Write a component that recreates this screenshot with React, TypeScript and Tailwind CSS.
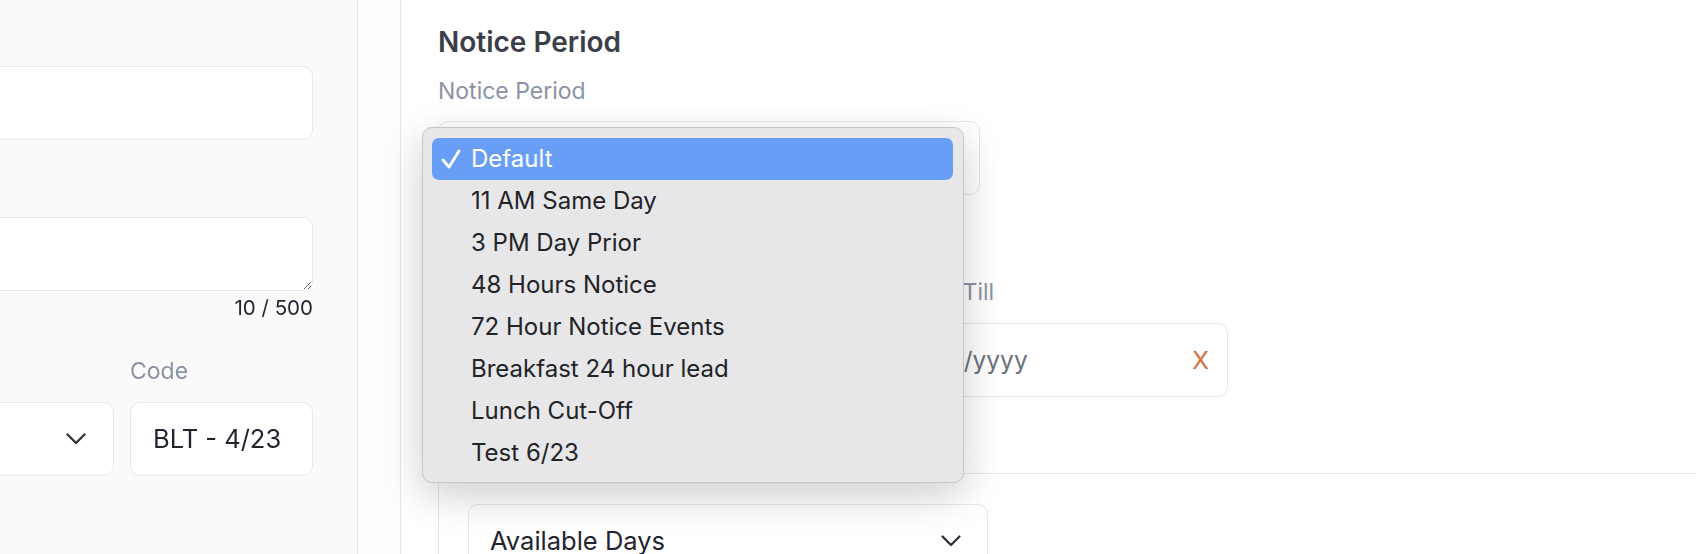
import type { ReactNode } from "react";

const noticeOptions = [
  "Default",
  "11 AM Same Day",
  "3 PM Day Prior",
  "48 Hours Notice",
  "72 Hour Notice Events",
  "Breakfast 24 hour lead",
  "Lunch Cut-Off",
  "Test 6/23",
];

function Chevron() {
  return (
    <svg width="20" height="12" viewBox="0 0 20 12" fill="none" className="shrink-0">
      <polyline
        points="1.5,1.5 10,10 18.5,1.5"
        stroke="#2b2f36"
        strokeWidth="2.2"
        strokeLinecap="round"
        strokeLinejoin="round"
      />
    </svg>
  );
}

function Check() {
  return (
    <svg width="20" height="20" viewBox="0 0 20 20" fill="none" className="shrink-0">
      <polyline
        points="2,11 8,18 18,2"
        stroke="#ffffff"
        strokeWidth="2.8"
        strokeLinecap="round"
        strokeLinejoin="round"
      />
    </svg>
  );
}

function FieldLabel({ children }: { children: ReactNode }) {
  return <label className="block text-[23px] leading-[30px] text-[#8a93a5]">{children}</label>;
}

function DateField({ label }: { label: string }) {
  return (
    <div>
      <FieldLabel>{label}</FieldLabel>
      <div className="mt-[16px] flex h-[74px] items-center justify-between rounded-[10px] border border-[#e6e7ea] bg-white pl-[22px] pr-[18px] text-[24.5px]">
        <span className="text-[#6b7280]">mm/dd/yyyy</span>
        <span className="text-[#d0703a]">X</span>
      </div>
    </div>
  );
}

export default function App() {
  return (
    <div className="flex h-[554px] w-[1696px] overflow-hidden bg-white font-['Inter','Liberation_Sans',sans-serif] text-[#1f2430]">
      {/* left form column, mostly scrolled out of view */}
      <aside className="w-[358px] shrink-0 overflow-hidden border-r border-[#e6e7ea] bg-[#fafafa]">
        <div className="ml-[-287px] w-[600px] pt-[66px]">
          <div className="h-[74px] rounded-[10px] border border-[#e6e7ea] bg-white" />

          <textarea
            className="mt-[77px] block h-[74px] w-full resize-y rounded-[10px] border border-[#e6e7ea] bg-white px-[22px] py-[18px] text-[25.5px] outline-none"
            defaultValue="Lunch menu"
          />
          <p className="mt-[5px] text-right text-[20.5px] leading-[24px] text-[#1f2430]">10 / 500</p>

          <div className="mt-[36px] flex gap-4">
            <div className="flex-1">
              <FieldLabel>Category</FieldLabel>
              <div className="mt-[16px] flex h-[74px] items-center justify-end rounded-[10px] border border-[#e6e7ea] bg-white pr-[27px]">
                <Chevron />
              </div>
            </div>
            <div className="w-[183px]">
              <FieldLabel>Code</FieldLabel>
              <div className="mt-[16px] flex h-[74px] items-center rounded-[10px] border border-[#e6e7ea] bg-white px-[22px] text-[25.5px]">
                BLT - 4/23
              </div>
            </div>
          </div>
        </div>
      </aside>

      <div className="w-[42px] shrink-0 bg-[#fdfdfd]" />

      <main className="relative flex-1 border-l border-[#e6e7ea] bg-white pl-[37px] pt-[25px]">
        <h2 className="text-[28px] font-semibold leading-[34px] text-[#3a3f49]">Notice Period</h2>
        <div className="mt-[17px]">
          <FieldLabel>Notice Period</FieldLabel>
        </div>
        <div className="mt-[15px] flex h-[74px] w-[542px] items-center justify-between rounded-[10px] border border-[#e6e7ea] bg-white px-[22px] text-[25.5px]">
          <span>Default</span>
          <Chevron />
        </div>

        <div className="mt-[82px] grid w-[790px] grid-cols-[400px_369px] gap-x-[21px]">
          <DateField label="Available From" />
          <DateField label="Available Till" />
        </div>

        <div className="mt-[76px] rounded-tl-[10px] border-l border-t border-[#e6e7ea] pl-[29px] pt-[30px]">
          <div className="flex h-[74px] w-[520px] items-center justify-between rounded-[10px] border border-[#e6e7ea] bg-white pl-[21px] pr-[26px] text-[25.5px]">
            <span>Available Days</span>
            <Chevron />
          </div>
        </div>

        {/* native select popup */}
        <div className="absolute left-[21px] top-[127px] h-[356px] w-[542px] rounded-[10px] border border-[#c6c6c9] bg-[#e7e7e9] pl-[9px] pr-[10px] pt-[10px] shadow-[0_12px_40px_rgba(0,0,0,0.2)]">
          {noticeOptions.map((option, i) => (
            <div
              key={option}
              className={
                i === 0
                  ? "flex h-[42px] items-center rounded-[7px] bg-[#699ef6] pl-[9px] text-[24px] text-white"
                  : "flex h-[42px] items-center pl-[39px] text-[24px] text-[#222326]"
              }
            >
              {i === 0 && (
                <span className="mr-[10px] flex w-[20px]">
                  <Check />
                </span>
              )}
              {option}
            </div>
          ))}
        </div>
      </main>
    </div>
  );
}
